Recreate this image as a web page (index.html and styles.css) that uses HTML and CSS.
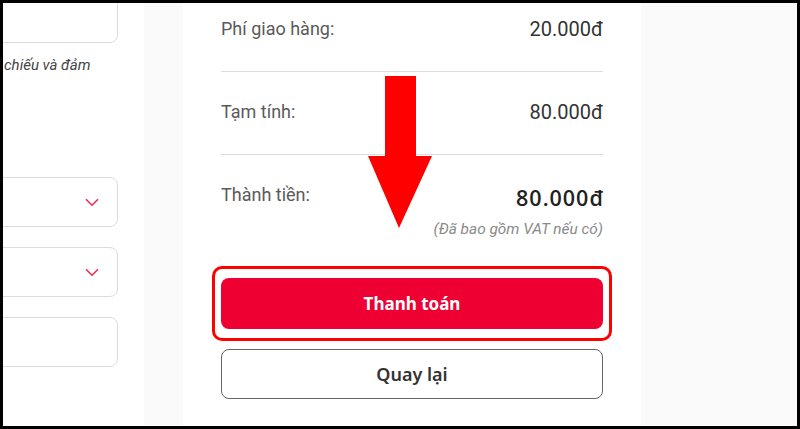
FILE: index.html
```html
<!DOCTYPE html>
<html lang="vi">
<head>
<meta charset="utf-8">
<title>Thanh toán</title>
<link rel="stylesheet" href="styles.css">
</head>
<body>
<div class="frame">
  <aside class="left">
    <div class="field field-top"></div>
    <p class="hint">chiếu và đảm</p>
    <div class="field select first">
      <svg class="chev" width="14" height="9" viewBox="0 0 14 9"><path d="M1 1.2 L7 7.2 L13 1.2" fill="none" stroke="#ec2a55" stroke-width="1.6"/></svg>
    </div>
    <div class="field select">
      <svg class="chev" width="14" height="9" viewBox="0 0 14 9"><path d="M1 1.2 L7 7.2 L13 1.2" fill="none" stroke="#ec2a55" stroke-width="1.6"/></svg>
    </div>
    <div class="field"></div>
  </aside>
  <div class="gutter"></div>
  <main class="summary">
    <div class="row row-first">
      <span class="label">Phí giao hàng:</span>
      <span class="value">20.000đ</span>
    </div>
    <div class="row">
      <span class="label">Tạm tính:</span>
      <span class="value">80.000đ</span>
    </div>
    <div class="row row-total">
      <span class="label">Thành tiền:</span>
      <div class="total">
        <span class="total-value">80.000đ</span>
        <span class="note">(Đã bao gồm VAT nếu có)</span>
      </div>
    </div>
    <div class="actions">
      <button class="btn pay">Thanh toán</button>
      <button class="btn back">Quay lại</button>
    </div>
    <svg class="arrow" width="64" height="152" viewBox="0 0 64 152"><polygon points="17,0 48,0 48,80 64,80 31,152 0,80 17,80" fill="#ff0000"/></svg>
  </main>
  <div class="side"></div>
</div>
</body>
</html>
```
FILE: styles.css
```css
* { box-sizing: border-box; }
html, body { margin: 0; padding: 0; background: #000; }
.frame {
  width: 800px;
  height: 429px;
  border: 3px solid #000;
  display: flex;
  overflow: hidden;
  font-family: Roboto, "Liberation Sans", sans-serif;
}
.left {
  width: 141px;
  background: #fff;
  overflow: hidden;
  flex: none;
}
.field {
  margin-left: -20px;
  width: 135px;
  height: 50px;
  border: 1px solid #dcdcdc;
  border-radius: 8px;
  background: #fff;
}
.field-top { margin-top: -10px; }
.hint {
  margin: 14px 0 0 1px;
  font-size: 15px;
  line-height: 16px;
  font-style: italic;
  color: #444;
  white-space: nowrap;
}
.select {
  display: flex;
  justify-content: flex-end;
  align-items: center;
  padding-right: 18px;
  margin-bottom: 20px;
}
.select.first { margin-top: 104px; }
.gutter { width: 39px; background: #fafafa; flex: none; }
.side { flex: 1; background: #fafafa; }
.summary {
  width: 458px;
  flex: none;
  background: #fff;
  padding: 0 38px;
  position: relative;
}
.row {
  display: flex;
  justify-content: space-between;
  align-items: flex-start;
  padding: 28px 0 30px;
  border-bottom: 1px solid #dcdcdc;
  line-height: 24px;
}
.row-first { padding-top: 14px; }
.row-total { border-bottom: none; padding-bottom: 0; }
.label { font-size: 18px; color: #5a5a5a; }
.value { font-size: 20px; color: #333; }
.total {
  display: flex;
  flex-direction: column;
  align-items: flex-end;
}
.total-value {
  font-family: "Open Sans", "Liberation Sans", sans-serif;
  font-weight: 600;
  font-size: 21.5px;
  letter-spacing: 1px;
  margin-right: -1px;
  line-height: 30px;
  color: #222;
}
.note {
  margin-top: 7px;
  font-size: 15.4px;
  line-height: 18px;
  font-style: italic;
  color: #8a8a8a;
}
.actions {
  display: flex;
  flex-direction: column;
  gap: 20px;
  margin-top: 40px;
}
.btn {
  display: block;
  width: 100%;
  font-family: "Noto Sans", "Open Sans", sans-serif;
  font-size: 17px;
  font-weight: 700;
  border-radius: 8px;
  cursor: pointer;
}
.pay {
  height: 51px;
  background: #ee0033;
  color: #fff;
  border: none;
  position: relative;
}
.pay::after {
  content: "";
  position: absolute;
  top: -12px;
  bottom: -12px;
  left: -9px;
  right: -9px;
  border: 3px solid #ff0000;
  border-radius: 10px;
}
.back {
  height: 50px;
  background: #fff;
  color: #333;
  font-size: 18px;
  font-weight: 600;
  border: 1px solid #666;
}
.arrow {
  position: absolute;
  left: 185px;
  top: 73px;
}
```
